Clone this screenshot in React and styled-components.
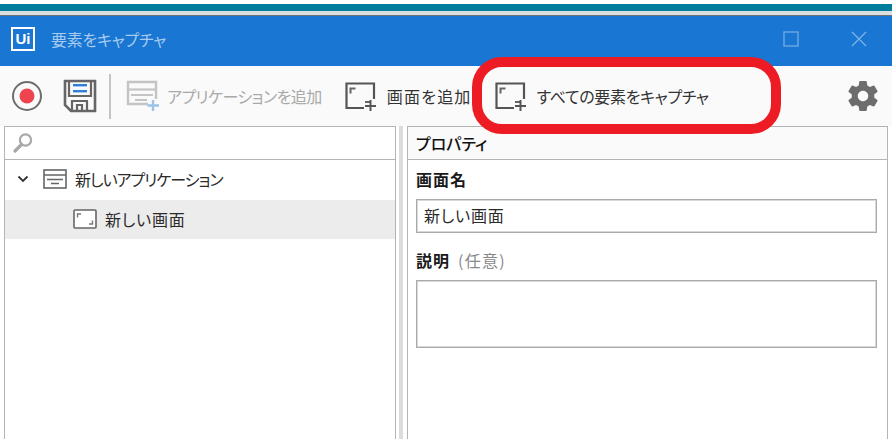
import React from 'react'
import styled, { createGlobalStyle } from 'styled-components'

const GlobalStyle = createGlobalStyle`
    html, body {
        margin: 0;
        padding: 0;
        background: #ffffff;
    }
    body {
        font-family: "Noto Sans CJK JP", "Noto Sans", sans-serif;
        font-feature-settings: "palt";
        color: #222222;
    }
`

const Page = styled.div`
    position: relative;
    width: 892px;
    height: 439px;
    overflow: hidden;
    display: flex;
    flex-direction: column;
    background: #ffffff;
`

const Backdrop = styled.div`
    height: 16px;
    box-sizing: border-box;
    padding-top: 4px;
    background: #ffffff;
    flex: none;
`

const TealStrip = styled.div`
    height: 7px;
    background: #007c9c;
    border-bottom: 4px solid #dcdfe0;
    box-shadow: 0 1px 0 #6f7274;
`

const TitleBar = styled.div`
    height: 50px;
    flex: none;
    box-sizing: border-box;
    display: flex;
    align-items: center;
    background: #1976d2;
    padding: 0 25px 4px 11px;
`

const Logo = styled.div`
    width: 24px;
    height: 24px;
    box-sizing: border-box;
    border: 2px solid #ffffff;
    background: #1976d2;
    color: #ffffff;
    font-family: "Liberation Sans", sans-serif;
    font-size: 15px;
    font-weight: 700;
    line-height: 19px;
    text-align: center;
    margin-right: 16px;
`

const Title = styled.div`
    flex: 1;
    color: #a6cbef;
    font-size: 16px;
    letter-spacing: -0.25px;
`

const WindowButtons = styled.div`
    display: flex;
    align-items: center;
    gap: 52px;
`

const Toolbar = styled.div`
    height: 60px;
    flex: none;
    display: flex;
    align-items: center;
    background: #fafafa;
    padding-left: 11px;
`

const IconSlot = styled.div`
    display: flex;
    margin-right: ${props => props.$gap || 0}px;
`

const Divider = styled.div`
    width: 2px;
    height: 45px;
    background: #c4c4c4;
    margin-right: 15px;
`

const ToolButton = styled.div`
    display: flex;
    align-items: center;
    gap: ${props => props.$gap}px;
    margin-right: ${props => props.$after}px;
    font-size: 16px;
    letter-spacing: ${props => props.$track}px;
    white-space: nowrap;
    color: ${props => (props.$disabled ? '#a9a9a9' : '#333333')};
`

const Spacer = styled.div`
    flex: 1;
`

const Highlight = styled.div`
    position: absolute;
    left: 472px;
    top: 57px;
    width: 309px;
    height: 77px;
    box-sizing: border-box;
    border: 10px solid #ed1c24;
    border-radius: 30px;
`

const Body = styled.div`
    flex: 1;
    display: flex;
    padding: 0 4px;
    min-height: 0;
`

const LeftPanel = styled.div`
    width: 392px;
    flex: none;
    box-sizing: border-box;
    border-top: 1px solid #b4b4b4;
    border-left: 1px solid #b4b4b4;
    border-right: 1px solid #b4b4b4;
    background: #ffffff;
`

const Splitter = styled.div`
    width: 11px;
    flex: none;
    box-sizing: border-box;
    background: #ffffff;
    padding: 0 4px 0 3px;

    &::before {
        content: "";
        display: block;
        height: 100%;
        background: #dcdcdc;
    }
`

const RightPanel = styled.div`
    flex: 1;
    box-sizing: border-box;
    border-top: 1px solid #b4b4b4;
    border-left: 1px solid #b4b4b4;
    border-right: 1px solid #b4b4b4;
    background: #ffffff;
`

const SearchRow = styled.div`
    height: 33px;
    box-sizing: border-box;
    display: flex;
    align-items: center;
    padding-left: 7px;
    border-bottom: 1px solid #b4b4b4;
`

const TreeRow = styled.div`
    height: ${props => props.$height}px;
    box-sizing: border-box;
    display: flex;
    align-items: center;
    padding-left: ${props => props.$indent}px;
    padding-bottom: 2px;
    background: ${props => (props.$selected ? '#ececec' : '#ffffff')};
    font-size: 16px;
    letter-spacing: ${props => props.$track}px;
    color: #2a2a2a;
    white-space: nowrap;
`

const TreeGap = styled.div`
    display: flex;
    margin-right: ${props => props.$gap}px;
`

const PropsHeader = styled.div`
    height: 33px;
    box-sizing: border-box;
    display: flex;
    align-items: center;
    padding: 0 0 1px 8px;
    background: #fafafa;
    border-bottom: 1px solid #b4b4b4;
    font-size: 16px;
    font-weight: 500;
    color: #111111;
`

const Form = styled.div`
    padding: 7px 10px 0 8px;
`

const Label = styled.div`
    height: 24px;
    display: flex;
    align-items: center;
    font-size: 16px;
    font-weight: 700;
    letter-spacing: 1px;
    color: #1a1a1a;
`

const Optional = styled.span`
    font-weight: 400;
    letter-spacing: 1.3px;
    color: #8a8a8a;
    margin-left: 8px;
`

const TextInput = styled.div`
    height: 34px;
    box-sizing: border-box;
    display: flex;
    align-items: center;
    margin: 8px 0 15px;
    padding: 0 0 2px 7px;
    border: 1px solid #aaaaaa;
    box-shadow: inset 0 0 0 1px #d8d8d8;
    font-size: 16px;
    letter-spacing: 0.8px;
    color: #2a2a2a;
`

const TextArea = styled.div`
    height: 68px;
    box-sizing: border-box;
    margin-top: 8px;
    border: 1px solid #aaaaaa;
    box-shadow: inset 0 0 0 1px #d8d8d8;
`

const RecordIcon = () => (
    <svg width="32" height="32" viewBox="0 0 32 32">
        <circle cx="16" cy="16" r="14" fill="none" stroke="#6e6e6e" strokeWidth="2" />
        <circle cx="16" cy="16" r="7.5" fill="#ee4450" />
    </svg>
)

const SaveIcon = () => (
    <svg width="34" height="34" viewBox="0 0 34 34">
        <path d="M2 2H32V32H8L2 26Z" fill="none" stroke="#666666" strokeWidth="2.6" />
        <path d="M6 2V17H28V2" fill="none" stroke="#666666" strokeWidth="2.2" />
        <rect x="10" y="5" width="14" height="2.4" fill="#2f80d8" />
        <rect x="10" y="11" width="14" height="2.4" fill="#2f80d8" />
        <path d="M9 32V22H24V32M14 32V26H19V32" fill="none" stroke="#666666" strokeWidth="2.2" />
    </svg>
)

const AddAppIcon = () => (
    <svg width="34" height="32" viewBox="0 0 34 32">
        <path d="M22 24H2V2H30V19" fill="none" stroke="#c4c4c4" strokeWidth="2.4" />
        <path d="M2 9.5H30" stroke="#c4c4c4" strokeWidth="2.2" />
        <path d="M5 15H27M9 20H21" stroke="#c4c4c4" strokeWidth="2" />
        <path d="M27 20V31M21.5 25.5H33" stroke="#9cc3e8" strokeWidth="2.4" />
    </svg>
)

const AddScreenIcon = () => (
    <svg width="32" height="29" viewBox="0 0 32 29">
        <path d="M19 26H1.5V1.5H29V17" fill="none" stroke="#555555" strokeWidth="2.2" />
        <path d="M10.5 6.5H5.5V11.5" fill="none" stroke="#666666" strokeWidth="2" />
        <path d="M20 20H25" stroke="#666666" strokeWidth="2" />
        <path d="M25.5 18V29M20 24H31" stroke="#555555" strokeWidth="2" />
    </svg>
)

const GearIcon = () => (
    <svg width="36" height="36" viewBox="0 0 24 24">
        <path
            fill="#6d6d6d"
            d="M19.43 12.98c.04-.32.07-.64.07-.98s-.03-.66-.07-.98l2.11-1.65c.19-.15.24-.42.12-.64l-2-3.46c-.12-.22-.39-.3-.61-.22l-2.49 1c-.52-.4-1.08-.73-1.69-.98l-.38-2.65A.488.488 0 0 0 14 2h-4c-.25 0-.46.18-.49.42l-.38 2.65c-.61.25-1.17.59-1.69.98l-2.49-1c-.23-.09-.49 0-.61.22l-2 3.46c-.13.22-.07.49.12.64l2.11 1.65c-.04.32-.07.65-.07.98s.03.66.07.98l-2.11 1.65c-.19.15-.24.42-.12.64l2 3.46c.12.22.39.3.61.22l2.49-1c.52.4 1.08.73 1.69.98l.38 2.65c.03.24.24.42.49.42h4c.25 0 .46-.18.49-.42l.38-2.65c.61-.25 1.17-.59 1.69-.98l2.49 1c.23.09.49 0 .61-.22l2-3.46c.12-.22.07-.49-.12-.64l-2.11-1.65zM12 15.5c-1.93 0-3.5-1.57-3.5-3.5s1.57-3.5 3.5-3.5 3.5 1.57 3.5 3.5-1.57 3.5-3.5 3.5z"
        />
    </svg>
)

const SearchIcon = () => (
    <svg width="22" height="22" viewBox="0 0 22 22">
        <circle cx="13.5" cy="8" r="5.6" fill="none" stroke="#a8a8a8" strokeWidth="2.2" />
        <path d="M9.5 12.5L3 19" stroke="#a8a8a8" strokeWidth="3.2" strokeLinecap="round" />
    </svg>
)

const Chevron = () => (
    <svg width="12" height="8" viewBox="0 0 12 8">
        <path d="M1.5 1.5L6 6L10.5 1.5" fill="none" stroke="#333333" strokeWidth="1.8" />
    </svg>
)

const AppNodeIcon = () => (
    <svg width="24" height="20" viewBox="0 0 24 20">
        <rect x="1" y="1" width="22" height="18" fill="none" stroke="#666666" strokeWidth="1.6" />
        <path d="M1 6H23M4 10.5H20M8 14.5H16" stroke="#666666" strokeWidth="1.5" />
    </svg>
)

const ScreenNodeIcon = () => (
    <svg width="24" height="20" viewBox="0 0 24 20">
        <rect x="1" y="1" width="22" height="18" rx="1" fill="#ffffff" stroke="#666666" strokeWidth="1.6" />
        <path d="M8 5H4.5V8.5M16 15H19.5V11.5" fill="none" stroke="#777777" strokeWidth="1.4" />
    </svg>
)

const MaximizeIcon = () => (
    <svg width="16" height="16" viewBox="0 0 16 16">
        <rect x="1" y="1" width="14" height="14" fill="none" stroke="#6da8e2" strokeWidth="1.4" />
    </svg>
)

const CloseIcon = () => (
    <svg width="16" height="16" viewBox="0 0 16 16">
        <path d="M1 1L15 15M15 1L1 15" stroke="#7fb2e6" strokeWidth="1.3" />
    </svg>
)

function App() {
    return (
        <>
            <GlobalStyle />
            <Page>
                <Backdrop>
                    <TealStrip />
                </Backdrop>

                <TitleBar>
                    <Logo>Ui</Logo>
                    <Title>要素をキャプチャ</Title>
                    <WindowButtons>
                        <MaximizeIcon />
                        <CloseIcon />
                    </WindowButtons>
                </TitleBar>

                <Toolbar>
                    <IconSlot $gap={20}><RecordIcon /></IconSlot>
                    <IconSlot $gap={12}><SaveIcon /></IconSlot>
                    <Divider />
                    <ToolButton $disabled $gap={7} $after={23} $track={-0.55}>
                        <AddAppIcon />
                        アプリケーションを追加
                    </ToolButton>
                    <ToolButton $gap={10} $after={23} $track={1.2}>
                        <AddScreenIcon />
                        画面を追加
                    </ToolButton>
                    <ToolButton $gap={10} $after={0} $track={-0.35}>
                        <AddScreenIcon />
                        すべての要素をキャプチャ
                    </ToolButton>
                    <Spacer />
                    <IconSlot $gap={11}><GearIcon /></IconSlot>
                </Toolbar>

                <Body>
                    <LeftPanel>
                        <SearchRow><SearchIcon /></SearchRow>
                        <TreeRow $height={40} $indent={12} $track={-1}>
                            <TreeGap $gap={14}><Chevron /></TreeGap>
                            <TreeGap $gap={8}><AppNodeIcon /></TreeGap>
                            新しいアプリケーション
                        </TreeRow>
                        <TreeRow $height={39} $indent={68} $track={0.8} $selected>
                            <TreeGap $gap={8}><ScreenNodeIcon /></TreeGap>
                            新しい画面
                        </TreeRow>
                    </LeftPanel>

                    <Splitter />

                    <RightPanel>
                        <PropsHeader>プロパティ</PropsHeader>
                        <Form>
                            <Label>画面名</Label>
                            <TextInput>新しい画面</TextInput>
                            <Label>説明<Optional>(任意)</Optional></Label>
                            <TextArea />
                        </Form>
                    </RightPanel>
                </Body>

                <Highlight />
            </Page>
        </>
    )
}

export default App
